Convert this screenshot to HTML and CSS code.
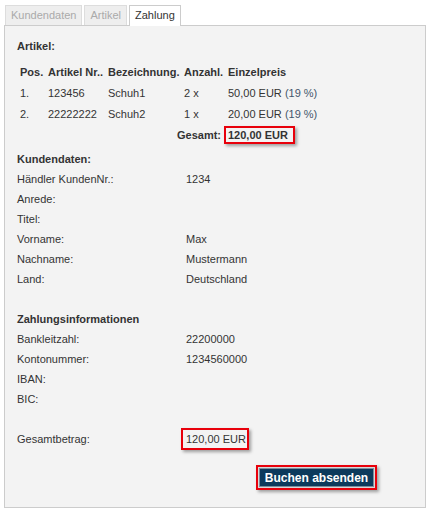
FILE: index.html
```html
<!DOCTYPE html>
<html lang="de">
<head>
    <meta charset="UTF-8">
    <meta name="viewport" content="width=device-width, initial-scale=1.0">
    <title>Zahlung</title>
    <link rel="stylesheet" href="styles.css">
</head>
<body>
    <div class="tabs">
        <span class="tab">Kundendaten</span>
        <span class="tab">Artikel</span>
        <span class="tab active">Zahlung</span>
    </div>
    <div class="panel">
        <div class="heading">Artikel:</div>
        <div class="articles">
            <div class="th">Pos.</div>
            <div class="th">Artikel Nr..</div>
            <div class="th">Bezeichnung.</div>
            <div class="th">Anzahl.</div>
            <div class="th">Einzelpreis</div>

            <div>1.</div>
            <div>123456</div>
            <div>Schuh1</div>
            <div>2 x</div>
            <div>50,00 EUR <span class="tax">(19 %)</span></div>

            <div>2.</div>
            <div>22222222</div>
            <div>Schuh2</div>
            <div>1 x</div>
            <div>20,00 EUR <span class="tax">(19 %)</span></div>

            <div class="sum-label">Gesamt:</div>
            <div><span class="mark bold">120,00 EUR</span></div>
        </div>

        <div class="heading gap-top">Kundendaten:</div>
        <div class="fields">
            <div>Händler KundenNr.:</div><div>1234</div>
            <div>Anrede:</div><div></div>
            <div>Titel:</div><div></div>
            <div>Vorname:</div><div>Max</div>
            <div>Nachname:</div><div>Mustermann</div>
            <div>Land:</div><div>Deutschland</div>
        </div>

        <div class="heading section">Zahlungsinformationen</div>
        <div class="fields">
            <div>Bankleitzahl:</div><div>22200000</div>
            <div>Kontonummer:</div><div>1234560000</div>
            <div>IBAN:</div><div></div>
            <div>BIC:</div><div></div>
        </div>

        <div class="fields section">
            <div>Gesamtbetrag:</div><div><span class="mark total">120,00 EUR</span></div>
        </div>

        <div class="actions">
            <span class="mark btn-wrap"><button class="btn">Buchen absenden</button></span>
        </div>
    </div>
</body>
</html>
```

FILE: styles.css
```css
body {
    font-family: "Liberation Sans", Arial, sans-serif;
    font-size: 11px;
    color: #333;
    margin: 0;
    padding: 5px 4px 0 4px;
    background-color: #fff;
}

.tabs {
    display: flex;
    align-items: flex-start;
    gap: 2px;
    margin-left: 1px;
    height: 20px;
}

.tab {
    box-sizing: border-box;
    height: 20px;
    line-height: 19px;
    padding: 0 5px;
    border: 1px solid #ddd;
    border-bottom: none;
    background-color: #eee;
    color: #aaa;
}

/* active tab covers the panel's top border */
.tab.active {
    position: relative;
    z-index: 1;
    height: 21px;
    background-color: #fff;
    border-color: #ccc;
    color: #333;
}

.panel {
    border: 1px solid #ccc;
    background-color: #f3f3f3;
    padding: 10px 12px 17px 12px;
    box-sizing: border-box;
    width: 422px;
    height: 483px;
}

.heading {
    font-weight: bold;
    line-height: 20px;
}

.gap-top {
    margin-top: 4px;
}

.section {
    margin-top: 20px;
}

.articles {
    display: grid;
    grid-template-columns: 28px 60px 76px 44px auto;
    grid-auto-rows: 21px;
    align-items: center;
    margin-top: 5px;
    padding-left: 3px;
    white-space: nowrap;
}

.articles .th {
    font-weight: bold;
}

.tax {
    color: #44566b;
}

.sum-label {
    grid-column: 1 / 5;
    text-align: right;
    font-weight: bold;
    padding-right: 7px;
}

.bold {
    font-weight: bold;
}

.mark {
    border: 2px solid #e8000b;
    box-shadow: 2px 2px 3px rgba(0, 0, 0, 0.35);
}

.articles .mark {
    margin-left: -4px;
    padding: 1px 5px 1px 2px;
}

.fields {
    display: grid;
    grid-template-columns: 169px auto;
    grid-auto-rows: 20px;
    align-items: center;
}

.total {
    margin-left: -5px;
    padding: 3px 1px 3px 3px;
}

.actions {
    display: flex;
    justify-content: flex-end;
    padding-right: 36px;
    margin-top: 16px;
}

.btn-wrap {
    display: inline-block;
    padding: 1px;
    background-color: #d8d8d8;
    line-height: 0;
}

.btn {
    font-family: "Liberation Sans", Arial, sans-serif;
    font-size: 12px;
    font-weight: bold;
    color: #fff;
    background-color: #0c3a5c;
    border: 1px solid #7d8e9e;
    height: 19px;
    width: 115px;
    padding: 0;
    line-height: 16px;
}
```
